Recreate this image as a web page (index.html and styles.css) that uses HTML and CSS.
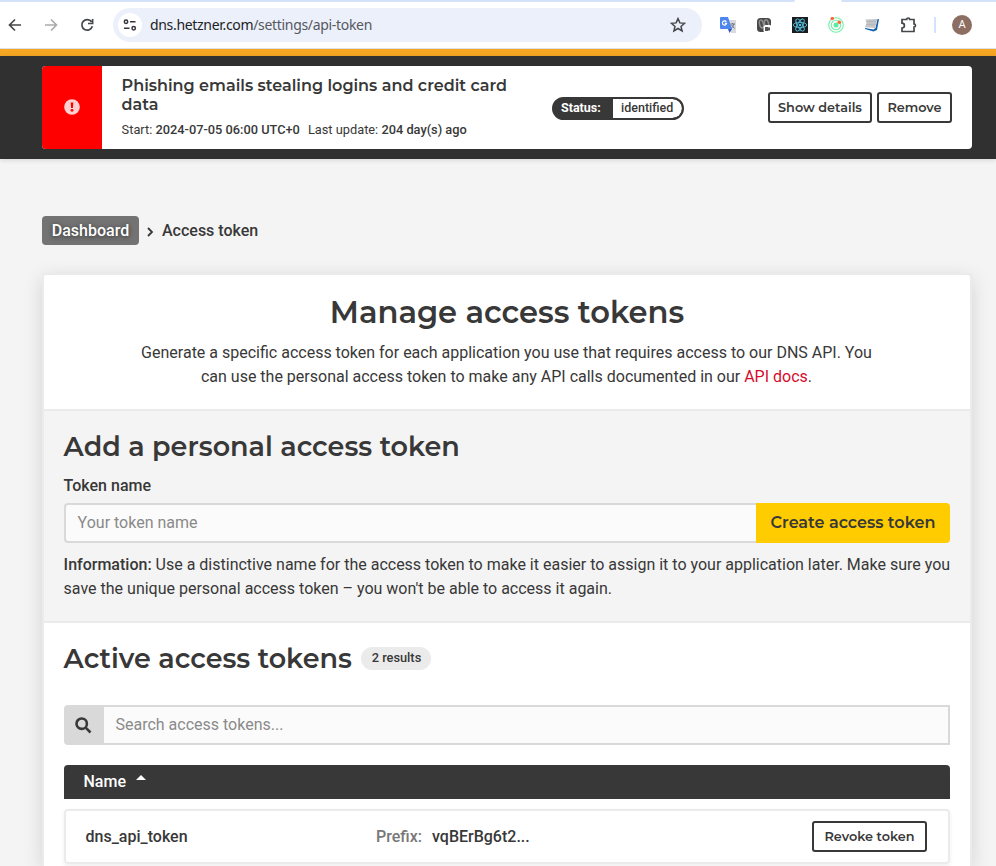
FILE: index.html
```html
<!DOCTYPE html>
<html lang="en">
<head>
<meta charset="utf-8">
<title>Access token</title>
<link rel="stylesheet" href="styles.css">
</head>
<body>
<header class="browser">
  <div class="tabs"><span class="tab-left"></span><span class="tab-right"></span></div>
  <div class="toolbar">
    <svg class="nav back" width="14" height="14" viewBox="0 0 14 14"><path d="M13 7H2M7 1.500 1.500 7 7 12.500"/></svg>
    <svg class="nav forward" width="14" height="14" viewBox="0 0 14 14"><path d="M1 7h11M7 1.500 12.500 7 7 12.500"/></svg>
    <svg class="nav reload" width="14" height="14" viewBox="0 0 14 14"><path d="M11.500 3.800A5.300 5.300 0 1 0 12.300 8.200M12.600 1v4.500H8"/></svg>
    <div class="address">
      <span class="site"><svg width="14" height="12" viewBox="0 0 14 12"><circle cx="3" cy="2.700" r="1.700"/><path d="M7 2.700h5.500M1 9.300h5.500"/><circle cx="10.700" cy="9.300" r="1.700"/></svg></span>
      <span class="url">dns.hetzner.com<span class="path">/settings/api-token</span></span>
      <svg class="star" width="16" height="16" viewBox="0 0 16 16"><path d="m8 1.600 1.900 4.300 4.700.4-3.600 3.100 1.100 4.600L8 11.500 3.900 14 5 9.400 1.400 6.300l4.700-.4z"/></svg>
    </div>
    <div class="extensions">
      <svg width="16" height="16" viewBox="0 0 16 16"><path fill="#d9dadd" d="M6 3h10v13h-5z"/><path fill="#4c86ee" d="M1 0h7l4 12H1a1 1 0 0 1-1-1V1a1 1 0 0 1 1-1z"/><path fill="#3159bd" d="M8 12h4l-2.500 4z"/><path d="M6.300 4.800A2.100 2.100 0 1 0 6.600 6.400H4.800" fill="none" stroke="#fff" stroke-width="1.200"/><path d="M10.500 7H15M12.600 6v1M14 7c-.5 2-1.500 3-2.500 4m0-3 3 3.500" fill="none" stroke="#697884"/></svg>
      <svg width="16" height="16" viewBox="0 0 16 16"><rect x="1" y="1" width="14" height="14" rx="3.500" fill="#4a4949"/><ellipse cx="5.500" cy="7" rx="1.900" ry="4" transform="rotate(-14 5.500 7)" fill="none" stroke="#8f8f8f" stroke-width="1.500"/><ellipse cx="10.500" cy="6.500" rx="2" ry="3.700" transform="rotate(-14 10.500 6.500)" fill="none" stroke="#8f8f8f" stroke-width="1.500"/><rect x="7.500" y="8" width="8.500" height="8" rx="2.500" fill="#fff"/><path fill="#555" d="M9 10h3.500v1l1.500-.7v3.400l-1.500-.7v1H9z"/></svg>
      <svg width="16" height="16" viewBox="0 0 16 16"><path fill="#1b1c20" d="M0 0h16v16H0z"/><g fill="none" stroke="#53c1de" stroke-width=".9"><ellipse cx="8" cy="8" rx="6.800" ry="2.600"/><ellipse cx="8" cy="8" rx="6.800" ry="2.600" transform="rotate(60 8 8)"/><ellipse cx="8" cy="8" rx="6.800" ry="2.600" transform="rotate(120 8 8)"/></g><circle cx="8" cy="8" r="1.300" fill="#53c1de"/></svg>
      <svg width="16" height="16" viewBox="0 0 16 16"><g fill="none" stroke="#73efaa" stroke-width="1.100"><circle cx="8" cy="8" r="7.300"/><circle cx="8" cy="8" r="4.700"/></g><circle cx="8" cy="8" r="2.500" fill="#5bec9d"/><circle cx="4.300" cy="1.600" r="1.700" fill="#ff6534"/><circle cx="11.300" cy="5.200" r="1.800" fill="#ff6534"/></svg>
      <svg width="16" height="16" viewBox="0 0 16 16"><path fill="#1261ad" d="M13.500 2H15l-2 11-3.500 1.500L1 12v-1l8.500 1.500 2-1.500z"/><path fill="#c4c5c7" d="M1.500 2.500 13.300 2l-2.100 9L1 10.200l1.500-4z"/><path d="m3 4.500 9-.2M2.500 7.500l8.500.2" stroke="#b3b4b6" stroke-width=".8" fill="none"/></svg>
      <svg class="puzzle" width="18" height="18" viewBox="0 0 18 18"><path d="M2 3.500h4.700a1.500 1.500 0 0 1 3 0H14V8a1.500 1.500 0 0 1 0 3v4.500H2V12a2.400 2.400 0 0 0 0-4.800z"/></svg>
      <i class="divider"></i>
      <span class="avatar">A</span>
    </div>
  </div>
</header>
<div class="brandbar"></div>
<section class="notice-wrap">
  <div class="notice">
    <div class="alert"><svg width="16" height="16" viewBox="0 0 16 16"><circle cx="8" cy="8" r="7.800" fill="#ffd0d0"/><path d="M6.700 3.500h2.600l-.4 5.500H7.100z" fill="red"/><circle cx="8" cy="11.300" r="1.400" fill="red"/></svg></div>
    <div class="notice-text">
      <h2><span>Phishing emails stealing logins and credit card</span><br><span>data</span></h2>
      <p>Start: <b>2024-07-05 06:00 UTC+0</b><span class="update">Last update: <b>204 day(s) ago</b></span></p>
    </div>
    <div class="status"><span>Status:</span><b>identified</b></div>
    <div class="notice-actions"><button class="outline details">Show details</button><button class="outline remove">Remove</button></div>
  </div>
</section>
<main>
  <nav class="crumbs"><a class="crumb">Dashboard</a><svg width="7" height="10" viewBox="0 0 7 10"><path d="m1 1 4 4-4 4"/></svg><span>Access token</span></nav>
  <div class="panel">
    <section class="intro">
      <h1>Manage access tokens</h1>
      <p>Generate a specific access token for each application you use that requires access to our DNS API. You<br>can use the personal access token to make any API calls documented in our <a>API docs</a>.</p>
    </section>
    <section class="add">
      <h2>Add a personal access token</h2>
      <label>Token name</label>
      <div class="create-row"><div class="field">Your token name</div><button class="create">Create access token</button></div>
      <p><b>Information:</b> Use a distinctive name for the access token to make it easier to assign it to your application later. Make sure you<br>save the unique personal access token – you won't be able to access it again.</p>
    </section>
    <section class="active">
      <div class="heading"><h2>Active access tokens</h2><span class="count">2 results</span></div>
      <div class="search"><span class="search-icon"><svg width="17" height="17" viewBox="0 0 17 17"><circle cx="6.700" cy="6.700" r="5.200"/><path d="m10.700 10.700 4.800 4.800"/></svg></span><div class="search-field">Search access tokens...</div></div>
      <div class="table-head">Name<i></i></div>
      <div class="row"><b class="name">dns_api_token</b><span class="prefix">Prefix:</span><b class="value">vqBErBg6t2...</b><button class="outline revoke">Revoke token</button></div>
    </section>
  </div>
</main>
</body>
</html>
```
FILE: styles.css
```css
* { box-sizing: border-box; }
body { margin: 0; height: 866px; overflow: hidden; background: #f4f4f4; color: #383838; font: 16px/24px Roboto, sans-serif; }
h1, h2, p { margin: 0; }
b { font-weight: 500; }
svg { display: block; flex: none; }
h1, h2, button { font-family: Montserrat, Inter, sans-serif; font-weight: 600; white-space: nowrap; }
button { padding: 0; color: #383838; }
.browser { height: 49px; background: #fff; border-bottom: 1px solid #dfe1e5; }
.tabs { height: 2px; display: flex; justify-content: space-between; }
.tab-left { width: 795px; background: #d3e1fb; border-bottom-right-radius: 4px; }
.tab-right { width: 155px; background: #d3e1fb; border-bottom-left-radius: 4px; }
.toolbar { height: 46px; display: flex; align-items: center; padding: 0 24px 0 8px; }
.nav { fill: none; stroke: #45474a; stroke-width: 1.700; }
.forward { margin-left: 22px; stroke: #a9abad; }
.reload { margin: 0 19px 0 22px; }
.address { flex: none; width: 589px; height: 34px; border-radius: 17px; background: #ecf0fa; display: flex; align-items: center; padding: 0 16px 0 5px; }
.site { width: 24px; height: 24px; border-radius: 50%; background: #fff; display: grid; place-items: center; }
.site svg { fill: none; stroke: #35373b; stroke-width: 1.500; }
.url { margin-left: 8px; font: 14px/20px "Noto Sans", sans-serif; letter-spacing: -.32px; color: #202124; white-space: nowrap; }
.path { color: #55585e; }
.star { margin-left: auto; fill: none; stroke: #45474a; stroke-width: 1.500; }
.extensions { flex: 1; display: flex; align-items: center; gap: 20px; margin-left: 18px; }
.puzzle { fill: none; stroke: #45474a; stroke-width: 1.700; }
.divider { flex: none; width: 2px; height: 16px; background: #d3e3fd; margin-left: -4px; }
.avatar { flex: none; width: 20px; height: 20px; border-radius: 50%; background: #8d6e63; color: #fff; font: 11px/20px Roboto, sans-serif; text-align: center; margin-left: -4px; }
.brandbar { height: 7px; background: #f5a623; }
.notice-wrap { height: 103px; background: #303030; padding: 10px 24px 0 42px; box-shadow: 0 1px 5px #0002; }
.notice { height: 83px; background: #fff; border-radius: 4px; display: flex; overflow: hidden; padding-right: 20px; }
.alert { width: 60px; background: red; display: grid; place-items: center; padding: 0 1px 1px 0; }
.notice-text { width: 430px; padding: 10px 0 0 19.6px; }
.notice-text h2 { font-size: 16px; line-height: 19px; }
.notice-text p { font-size: 12.8px; line-height: 18px; margin-top: 7px; white-space: nowrap; }
.update { margin-left: 8px; }
.status { width: 132px; height: 23px; align-self: center; margin: 2px 0 0 20px; border: 2px solid #383838; border-radius: 12px; background: #383838; display: flex; overflow: hidden; font: 500 12.8px/18px Roboto, sans-serif; }
.status span { width: 59px; padding-left: 7px; color: #fff; font-weight: 700; font-size: 12.5px; }
.status b { flex: 1; background: #fff; padding-left: 8px; border-radius: 0 10px 10px 0; font-size: 12.5px; }
.notice-actions { margin-left: auto; align-self: center; display: flex; gap: 5px; }
.outline { height: 31px; background: #fff; border: 2px solid #383838; border-radius: 3px; font-size: 12.8px; padding-bottom: 1px; }
.details { width: 104px; }
.remove { width: 75px; }
main { padding: 57px 24px 0 42px; }
.crumbs { height: 29px; display: flex; align-items: center; font-weight: 500; }
.crumb { width: 97px; height: 29px; line-height: 29px; background: #737373; color: #fff; border-radius: 4px; text-align: center; text-shadow: 0 1px 5px #0009; }
.crumbs svg { fill: none; stroke: #383838; stroke-width: 1.800; margin: 3px 8px 0; }
.panel { margin-top: 28px; height: 593px; overflow: hidden; border: 2px solid #ebebeb; border-bottom: 0; border-radius: 4px 4px 0 0; background: #fff; box-shadow: 0 5px 20px #0002; }
.intro { height: 136px; border-bottom: 2px solid #ebebeb; text-align: center; padding-top: 18px; }
.intro h1 { font-size: 30.5px; line-height: 38px; }
.intro p { margin-top: 10px; padding-right: 1px; }
.intro a { color: #d50c2d; }
.add { height: 212px; background: #f4f4f4; border-bottom: 2px solid #ebebeb; padding: 19px 20px 0; }
.add h2, .active h2 { font-size: 27px; line-height: 34px; margin-left: -.4px; }
.add label { display: block; margin: 10px 0 0 -.4px; font-weight: 500; }
.create-row { display: flex; height: 40px; margin-top: 5px; }
.field { flex: 1; border: 2px solid #d9d9d9; border-right: 0; border-radius: 4px 0 0 4px; background: #fbfbfb; color: #8a8a8a; padding-left: 11.6px; line-height: 35px; }
.create { width: 194px; border: 0; border-radius: 0 4px 4px 0; background: #fc0; font-size: 16px; padding-bottom: 2px; }
.add p { margin: 10px 0 0 -.4px; white-space: nowrap; }
.active { padding: 19px 20px 0; }
.heading { display: flex; align-items: center; }
.count { width: 70px; height: 23px; border-radius: 12px; background: #ebebeb; margin: 0 0 1px 9.6px; font: 500 12.8px/22px Roboto, sans-serif; text-align: center; }
.search { height: 40px; margin-top: 29px; display: flex; }
.search-icon { width: 40px; background: #d9d9d9; border-radius: 4px 0 0 4px; display: grid; place-items: center; padding-right: 1px; }
.search-icon svg { fill: none; stroke: #383838; stroke-width: 2.600; }
.search-field { flex: 1; border: 2px solid #d9d9d9; border-left: 0; background: #fbfbfb; color: #8a8a8a; padding-left: 11.5px; line-height: 35px; }
.table-head { height: 34px; margin-top: 20px; border-radius: 4px 4px 0 0; background: #383838; color: #fff; font-weight: 500; line-height: 33px; padding-left: 19.5px; display: flex; }
.table-head i { margin: 10px 0 0 10px; width: 10px; height: 5px; background: #fff; clip-path: polygon(50% 0, 100% 100%, 0 100%); }
.row { height: 55px; margin-top: 10px; border: 2px solid #ebebeb; border-radius: 4px; box-shadow: 0 2px 4px #0001; display: flex; align-items: center; padding: 0 21px 0 19.5px; }
.name { width: 290.5px; }
.prefix { width: 56px; font-weight: 500; color: #777; }
.revoke { width: 115px; margin-left: auto; }
```
